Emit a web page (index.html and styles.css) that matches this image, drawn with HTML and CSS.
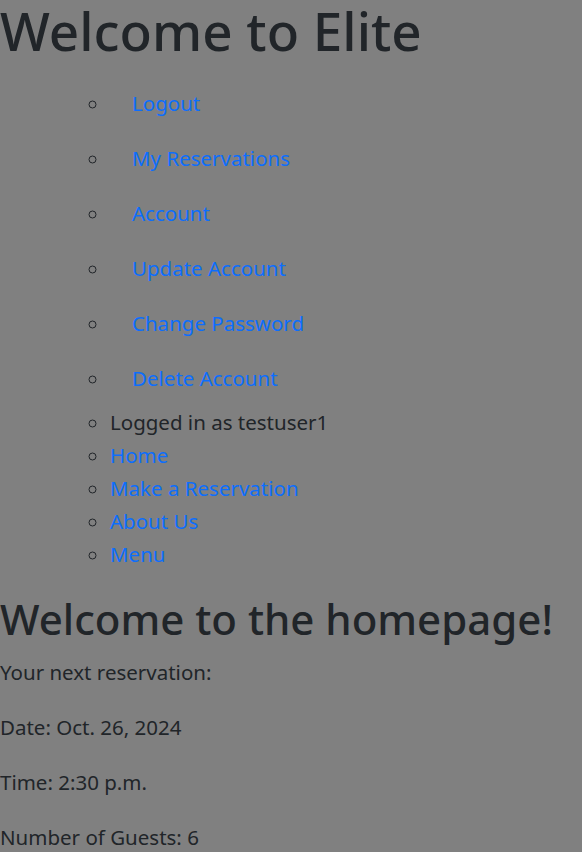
FILE: index.html
```html
<!DOCTYPE html>
<html lang="en">
<head>
<meta charset="utf-8">
<title>Elite</title>
<link rel="stylesheet" href="styles.css">
</head>
<body>
<h1 class="site-title">Welcome to Elite</h1>
<ul class="nav-list">
  <li><a class="nav-link" href="#">Logout</a></li>
  <li><a class="nav-link" href="#">My Reservations</a></li>
  <li><a class="nav-link" href="#">Account</a></li>
  <li><a class="nav-link" href="#">Update Account</a></li>
  <li><a class="nav-link" href="#">Change Password</a></li>
  <li><a class="nav-link" href="#">Delete Account</a></li>
  <li>Logged in as testuser1</li>
  <li><a class="plain-link" href="#">Home</a></li>
  <li><a class="plain-link" href="#">Make a Reservation</a></li>
  <li><a class="plain-link" href="#">About Us</a></li>
  <li><a class="plain-link" href="#">Menu</a></li>
</ul>
<h2 class="page-title">Welcome to the homepage!</h2>
<p class="info">Your next reservation:</p>
<p class="info">Date: Oct. 26, 2024</p>
<p class="info">Time: 2:30 p.m.</p>
<p class="info">Number of Guests: 6</p>
</body>
</html>
```
FILE: styles.css
```css
html, body {
  margin: 0;
  padding: 0;
}
body {
  background: #808080;
  color: #212529;
  font-family: "Noto Sans", "Open Sans", sans-serif;
  font-size: 20.5px;
  line-height: 33px;
}
.site-title {
  margin: -2px 0 12px 0;
  font-size: 53px;
  font-weight: 500;
  line-height: 66px;
}
.nav-list {
  list-style: circle;
  margin: 0 0 22px 0;
  padding-left: 110px;
}
.nav-link {
  display: block;
  padding: 11px 22px;
  color: #0d6efd;
  text-decoration: none;
}
.plain-link {
  color: #0d6efd;
  text-decoration: none;
}
.page-title {
  margin: 0 0 11px 0;
  font-size: 42px;
  font-weight: 500;
  line-height: 52px;
}
.info {
  margin: 0 0 22px 0;
}
```
